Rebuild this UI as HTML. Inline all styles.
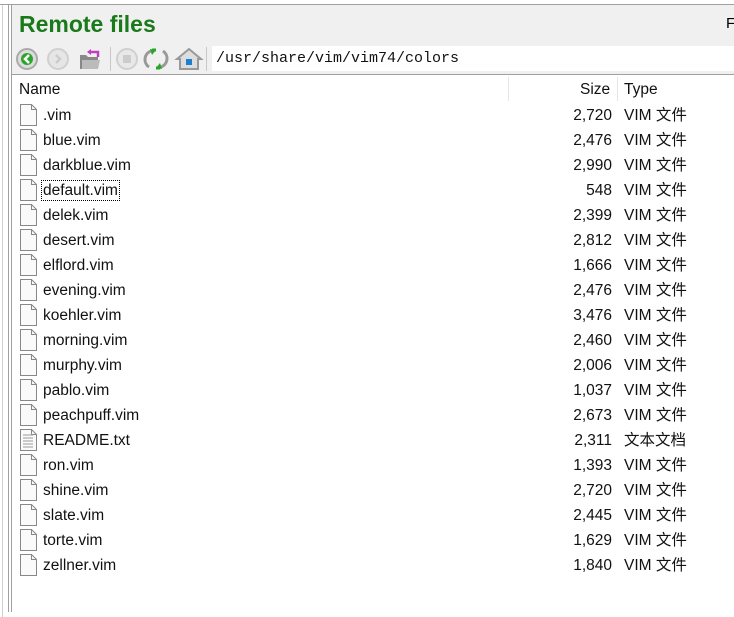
<!DOCTYPE html>
<html><head><meta charset="utf-8"><style>
body{margin:0;width:734px;height:617px;background:#fff;position:relative;overflow:hidden;font-family:"Liberation Sans","Noto Sans CJK SC",sans-serif;}
.top{position:absolute;left:0;top:0;width:734px;height:4px;background:#fff;border-bottom:1px solid #a0a0a0}
.lb1{position:absolute;left:2px;top:5px;width:1px;height:612px;background:#d0d0d0}
.lb2{position:absolute;left:8px;top:5px;width:1px;height:607px;background:#a0a0a0}
.lb3{position:absolute;left:11px;top:5px;width:1px;height:607px;background:#a0a0a0}
.hdr{position:absolute;left:12px;top:5px;width:722px;height:69px;background:#f0f0f0}
.title{position:absolute;left:19px;top:11px;font-size:23px;font-weight:bold;color:#1a7a1a}
.F{position:absolute;left:726px;top:15px;font-size:15px}
.path{position:absolute;left:212px;top:46px;width:522px;height:25px;background:#fff;font-family:"Liberation Mono",monospace;font-size:15px;line-height:25px;padding-left:4px;color:#111}
.sep{position:absolute;top:47px;width:1px;height:24px;background:#c8c8c8}
.lst{position:absolute;left:12px;top:74px;width:722px;height:1px;background:#a0a0a0}
.colh{position:absolute;top:80px;font-size:15.5px;line-height:19px;color:#111}
.row{position:absolute;left:18px;height:25px;width:700px;font-size:15.5px;color:#111}
.row span{line-height:19px;height:19px;display:block;white-space:nowrap}
.ic{position:absolute;left:2px;top:2px}
.nm{position:absolute;left:25px;top:4px}
.sz{position:absolute;right:106px;top:4px}
.ty{position:absolute;left:606px;top:4px}
</style></head><body>
<div class="top"></div><div class="lb1"></div><div class="lb2"></div><div class="lb3"></div>
<div class="hdr"></div>
<div class="title">Remote files</div><div class="F">F</div>
<svg style="position:absolute;left:14px;top:46px" width="196" height="26">
<circle cx="13" cy="13" r="10" fill="#ddd" stroke="#aaa" stroke-width="2"/><circle cx="13" cy="13" r="6" fill="#2aa52a"/><path d="M15 9 L11 13 L15 17" stroke="#fff" stroke-width="2.5" fill="none"/>
<circle cx="44" cy="13" r="10" fill="#e6e6e6" stroke="#d0d0d0" stroke-width="2"/><path d="M42 9 L46 13 L42 17" stroke="#ccc" stroke-width="2.5" fill="none"/>
<path d="M66 9 h6 l2 2 h10 v12 h-18z" fill="#888"/><path d="M68 14 h18 l-2 9 h-16z" fill="#bbb"/><path d="M76 6 h8 v5" stroke="#c040c0" stroke-width="2.5" fill="none"/><path d="M73 6 l4-3 v6z" fill="#c040c0"/>
<circle cx="113" cy="13" r="10" fill="#e8e8e8" stroke="#d0d0d0" stroke-width="2"/><rect x="109" y="9" width="8" height="8" fill="#ccc"/>
<path d="M137 5 a9 9 0 0 0 -2 16" stroke="#999" stroke-width="3" fill="none"/><path d="M147 21 a9 9 0 0 0 2 -16" stroke="#999" stroke-width="3" fill="none"/><path d="M136 3 l6 1 -4 5z" fill="#2aa52a"/><path d="M148 23 l-6 -1 4 -5z" fill="#2aa52a"/><path d="M138 4 h4" stroke="#2aa52a" stroke-width="3"/><path d="M146 22 h-4" stroke="#2aa52a" stroke-width="3"/>
<path d="M163 13 l12 -10 12 10 h-3 v10 h-18 v-10z" fill="#ddd" stroke="#999" stroke-width="2"/><rect x="172" y="13" width="6" height="6" fill="#1c7fd0"/>
</svg>
<div class="sep" style="left:110px"></div><div class="sep" style="left:206px"></div>
<div class="path">/usr/share/vim/vim74/colors</div>
<div class="lst"></div>
<div class="colh" style="left:19px">Name</div>
<div style="position:absolute;left:508px;top:77px;width:1px;height:24px;background:#e5e5e5"></div>
<div style="position:absolute;left:617px;top:77px;width:1px;height:24px;background:#e5e5e5"></div>
<div class="colh" style="left:580px">Size</div><div class="colh" style="left:624px">Type</div>
<div id="rows"></div>
<script>
var d=[[".vim","2,720"],["blue.vim","2,476"],["darkblue.vim","2,990"],["default.vim","548"],["delek.vim","2,399"],["desert.vim","2,812"],["elflord.vim","1,666"],["evening.vim","2,476"],["koehler.vim","3,476"],["morning.vim","2,460"],["murphy.vim","2,006"],["pablo.vim","1,037"],["peachpuff.vim","2,673"],["README.txt","2,311"],["ron.vim","1,393"],["shine.vim","2,720"],["slate.vim","2,445"],["torte.vim","1,629"],["zellner.vim","1,840"]];
var h="";
d.forEach(function(r,i){var txt=r[0]=="README.txt";
var lines=txt?'<path d="M3 6h10M3 9h10M3 12h10M3 15h10M3 18h10" stroke="#999" stroke-width="1"/>':'';
h+='<div class="row" style="top:'+(102+i*25)+'px"><svg class="ic" width="17" height="22"><path d="M0.5 0.5h11l5 5v16h-16z" fill="#fafafa" stroke="#888"/><path d="M11.5 0.5v5h5" fill="none" stroke="#888"/>'+lines+'</svg><span class="nm"'+(i==3?' style="outline:1px dotted #000;left:24px;padding:0 1px"':'')+'>'+r[0]+'</span><span class="sz">'+r[1]+'</span><span class="ty">'+(txt?'文本文档':'VIM 文件')+'</span></div>';});
document.getElementById("rows").innerHTML=h;
</script>
</body></html>
